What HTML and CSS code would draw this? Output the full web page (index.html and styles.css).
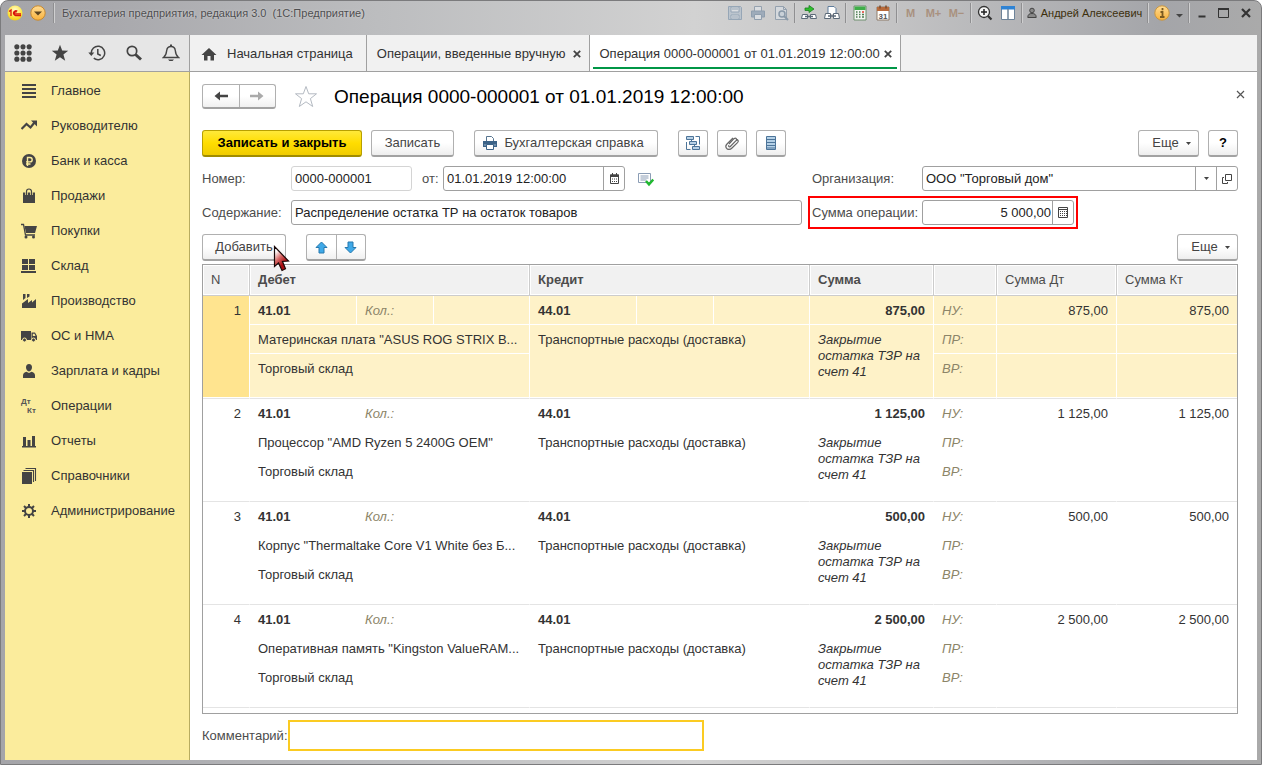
FILE: index.html
```html
<!DOCTYPE html>
<html lang="ru">
<head>
<meta charset="utf-8">
<title>Бухгалтерия предприятия, редакция 3.0</title>
<link rel="stylesheet" href="styles.css">
</head>
<body>
<div class="window">
  <header class="titlebar">
    <button class="tb-round" aria-label="Главное меню"><svg width="16" height="16" viewBox="0 0 16 16"><defs><radialGradient id="gy" cx=".5" cy=".3" r=".7"><stop offset="0" stop-color="#fffbd0"/><stop offset=".6" stop-color="#ffe84a"/><stop offset="1" stop-color="#f0c818"/></radialGradient><linearGradient id="go" x2="0" y2="1"><stop offset="0" stop-color="#ffdc94"/><stop offset="1" stop-color="#f9b23c"/></linearGradient></defs><circle cx="8" cy="8" r="7.5" fill="url(#gy)"/><path d="M2 6.500L4 5v6M10.300 6.200A2.400 2.400 0 1 0 8.500 10.500H14M9.300 7.400A1 1 0 1 0 8.500 8.800H14" fill="none" stroke="#d8140c" stroke-width="1.300"/></svg></button>
    <button class="tb-round" aria-label="Меню"><svg width="16" height="16" viewBox="0 0 16 16"><circle cx="8" cy="8" r="7.200" fill="url(#go)" stroke="#c98a2e"/><path d="M4 6.500h8L8 10.500z" fill="#5b4420"/></svg></button>
    <span class="tb-sep"></span>
    <span class="tb-title">Бухгалтерия предприятия, редакция 3.0&nbsp; (1С:Предприятие)</span>
    <div class="tb-tools">
      <button class="tb-btn faded" aria-label="Сохранить"><svg width="16" height="16" viewBox="0 0 16 16"><path d="M1.500 1.500h12l1 1v12h-13z" fill="#aebdcc" stroke="#718ba6"/><path d="M4 2h8v5H4zM4 10h8v4H4z" fill="#e3e8ee" stroke="#718ba6"/><path d="M5 4h6M5 12h6" stroke="#718ba6"/></svg></button>
      <button class="tb-btn faded" aria-label="Печать"><svg width="16" height="16" viewBox="0 0 16 16"><path d="M4.500 6V1.500h7V6" fill="#e3e8ee" stroke="#70859b"/><path d="M1.500 6h13v6h-13z" fill="#7f96ae" stroke="#667f99"/><path d="M4.500 9.500h7v5h-7z" fill="#e3e8ee" stroke="#667f99"/></svg></button>
      <button class="tb-btn faded" aria-label="Просмотр"><svg width="16" height="16" viewBox="0 0 16 16"><path d="M2.500 1.500h8l3 3v10h-11z" fill="#dce2e9" stroke="#70859b"/><path d="M10.500 1.500v3h3" fill="none" stroke="#70859b"/><circle cx="9" cy="9" r="3" fill="#c9d5e0" stroke="#5e7891" stroke-width="1.500"/><path d="M11 11l4 4" stroke="#5e7891" stroke-width="2"/></svg></button>
      <span class="tb-sep"></span>
      <button class="tb-btn" aria-label="Получить ссылку"><svg width="16" height="16" viewBox="0 0 16 16"><path d="M4 5.500V3h4V.500L13 4 8 7.500V5.500z" fill="#2fc02f" stroke="#1b7d1f" stroke-width=".8"/><path d="M1.500 9.500h5v4h-6zM9.500 9.500h5l1 4h-6z" fill="#fff" stroke="#5c6a78"/><path d="M4 11.500h8" stroke="#5c6a78" stroke-width="1.500"/></svg></button>
      <button class="tb-btn" aria-label="Перейти по ссылке"><svg width="16" height="16" viewBox="0 0 16 16"><path d="M4 9V1.500h6l2 2V9" fill="#fff" stroke="#5f7d9c"/><path d="M1.500 8.500h5v5h-6zM9.500 8.500h5l1 5h-6z" fill="#fff" stroke="#5c6a78"/><path d="M4 11h8" stroke="#5c6a78" stroke-width="1.500"/></svg></button>
      <span class="tb-sep"></span>
      <button class="tb-btn" aria-label="Калькулятор"><svg width="16" height="16" viewBox="0 0 16 16"><path d="M2 1h12v14H2z" fill="#f4f7f4" stroke="#6f8f6f"/><path d="M2.500 1.500h11v3.500h-11z" fill="#3fae49"/><path d="M4 7h1.500M7 7h1.500M4 9.500h1.500M7 9.500h1.500M4 12h1.500M7 12h1.500M10 9.500h2M10 12h2" stroke="#4c7c50" stroke-width="1.500"/><path d="M10 7h2" stroke="#e03a2c" stroke-width="1.500"/></svg></button>
      <button class="tb-btn" aria-label="Календарь"><svg width="16" height="16" viewBox="0 0 16 16"><path d="M2 2h12v13H2z" fill="#fff" stroke="#8e7a68"/><path d="M2 2h12v4H2z" fill="#b86a3b"/><path d="M5 .500v3M11 .500v3" stroke="#7a4b2c" stroke-width="1.500"/><text x="8" y="13.500" font-size="8" text-anchor="middle" class="day">31</text></svg></button>
      <span class="tb-sep"></span>
      <button class="tb-btn mem">M</button>
      <button class="tb-btn mem">M+</button>
      <button class="tb-btn mem">M−</button>
      <span class="tb-sep"></span>
      <button class="tb-btn" aria-label="Масштаб"><svg width="16" height="16" viewBox="0 0 16 16"><circle cx="7" cy="7" r="5.500" fill="#f5f5f5" stroke="#333" stroke-width="1.300"/><path d="M4 7h6M7 4v6" stroke="#222" stroke-width="1.500"/><path d="M11 11l3.500 3.500" stroke="#333" stroke-width="2.200"/></svg></button>
      <button class="tb-btn" aria-label="Панели"><svg width="16" height="16" viewBox="0 0 16 16"><path d="M1.500 1.500h13v13h-13z" fill="#fff" stroke="#6d8399"/><path d="M1 1h14v3.500H1z" fill="#2f83d4"/><path d="M8 4v11" stroke="#6d8399" stroke-width="1.500"/></svg></button>
      <span class="tb-sep"></span>
      <button class="tb-user"><svg width="10" height="12" viewBox="0 0 10 12"><circle cx="5" cy="3.500" r="2.300" fill="#888" stroke="#444"/><path d="M.800 10.500c0-3 1.500-4 4.200-4s4.200 1 4.200 4z" fill="#888" stroke="#444"/></svg>Андрей Алексеевич</button>
      <span class="tb-sep"></span>
      <button class="tb-btn" aria-label="Справка"><svg width="16" height="16" viewBox="0 0 16 16"><circle cx="8" cy="8" r="7.200" fill="url(#go)" stroke="#c9963f"/><path d="M8.500 3v2.200M6.500 7h2v5M6 12h4.500" fill="none" stroke="#7b5a20" stroke-width="1.800"/></svg></button>
      <button class="tb-drop" aria-label="Еще"><svg width="9" height="9" viewBox="0 0 9 9"><path d="M1 5h7L4.500 8.500z" fill="#444"/></svg></button>
      <span class="tb-sep"></span>
      <button class="tb-win" aria-label="Свернуть"><svg width="12" height="12" viewBox="0 0 12 12"><path d="M2.500 9.500h7" stroke="#333" stroke-width="2"/></svg></button>
      <button class="tb-win" aria-label="Развернуть"><svg width="12" height="12" viewBox="0 0 12 12"><path d="M.500 1.500h10v9H.500z" fill="none" stroke="#333"/><path d="M0 2h11" stroke="#333" stroke-width="2"/></svg></button>
      <button class="tb-win" aria-label="Закрыть"><svg width="12" height="12" viewBox="0 0 12 12"><path d="M2 2l8 8M10 2l-8 8" stroke="#333" stroke-width="2.200"/></svg></button>
    </div>
  </header>

  <div class="app">
    <div class="topstrip">
      <div class="quick">
        <button aria-label="Разделы"><svg width="18" height="18" viewBox="0 0 19 19" fill="#444"><circle cx="3" cy="3" r="2.700"/><circle cx="9.500" cy="3" r="2.700"/><circle cx="16" cy="3" r="2.700"/><circle cx="3" cy="9.500" r="2.700"/><circle cx="9.500" cy="9.500" r="2.700"/><circle cx="16" cy="9.500" r="2.700"/><circle cx="3" cy="16" r="2.700"/><circle cx="9.500" cy="16" r="2.700"/><circle cx="16" cy="16" r="2.700"/></svg></button>
        <button aria-label="Избранное"><svg width="18" height="18" viewBox="0 0 18 18"><path d="M9 .800l2.200 5.800 6 .200-4.800 3.800 1.800 6.200L9 13.300l-5.200 3.500 1.800-6.200L.800 6.800l6-.200z" fill="#444"/></svg></button>
        <button aria-label="История"><svg width="18" height="18" viewBox="0 0 18 18" fill="none" stroke="#444" stroke-width="1.500"><path d="M3.300 9.500a6.700 6.700 0 1 1 2.500 4.700"/><path d="M9.800 5v5l3 1.500"/><path d="M.300 8.500h6l-3 3.500z" fill="#444" stroke="none"/></svg></button>
        <button aria-label="Поиск"><svg width="18" height="18" viewBox="0 0 18 18" fill="none" stroke="#444"><circle cx="7" cy="7" r="4.700" stroke-width="1.700"/><path d="M10.500 10.500L16 15.500" stroke-width="3"/></svg></button>
        <button aria-label="Уведомления"><svg width="18" height="18" viewBox="0 0 18 18"><path d="M1.500 13.500h15C14 11.500 13.500 9 13.300 6.500 13 4 11.500 2.500 9 2.500S5 4 4.700 6.500C4.500 9 4 11.500 1.500 13.500z" fill="none" stroke="#444" stroke-width="1.400"/><path d="M8 .500h2v2H8zM6 15.500h6L10.500 17h-3z" fill="#444"/></svg></button>
      </div>
      <nav class="tabs">
        <a class="tab home" href="#"><svg width="16" height="14" viewBox="0 0 16 14"><path d="M8 1L.500 8H3v5.500h3.500V9h3v4.500H13V8h2.500z" fill="#444"/></svg>Начальная страница</a>
        <div class="tab"><a href="#">Операции, введенные вручную</a><button aria-label="Закрыть вкладку"><svg width="8" height="8" viewBox="0 0 8 8"><path d="M.800.800l6.400 6.400M7.200.800L.800 7.200" stroke="#444" stroke-width="1.800"/></svg></button></div>
        <div class="tab active"><a href="#">Операция 0000-000001 от 01.01.2019 12:00:00</a><button aria-label="Закрыть вкладку"><svg width="8" height="8" viewBox="0 0 8 8"><path d="M.800.800l6.400 6.400M7.200.800L.800 7.200" stroke="#444" stroke-width="1.800"/></svg></button></div>
      </nav>
    </div>

    <div class="body">
      <nav class="sidebar">
        <a href="#"><svg viewBox="0 0 16 16"><path d="M1 2h14M1 6h14M1 10h14M1 14h14" stroke="#444" stroke-width="2"/></svg>Главное</a>
        <a href="#"><svg viewBox="0 0 16 16"><path d="M.500 11l5-5 4 3.500 4-5" fill="none" stroke="#444" stroke-width="2.200"/><path d="M10 2.500h6v6z" fill="#444"/></svg>Руководителю</a>
        <a href="#"><svg viewBox="0 0 16 16"><circle cx="8" cy="8" r="7" fill="#444"/><path d="M6.500 13V4.500H9a2.200 2.200 0 0 1 0 4.400H5M5 11h4.500" fill="none" stroke="#fbec9c" stroke-width="1.400"/></svg>Банк и касса</a>
        <a href="#"><svg viewBox="0 0 16 16"><path d="M2 4.500h12V15H2z" fill="#444"/><path d="M5.500 7V3.500a2.500 2.500 0 0 1 5 0V7" fill="none" stroke="#fbec9c" stroke-width="2.600"/><path d="M5.500 7V3.500a2.500 2.500 0 0 1 5 0V7" fill="none" stroke="#444" stroke-width="1.200"/></svg>Продажи</a>
        <a href="#"><svg viewBox="0 0 16 16"><path d="M3.500 3H16l-2 7H5z" fill="#444"/><path d="M0 1.500h2.500L4.500 12H14" stroke="#444" fill="none" stroke-width="1.300"/><circle cx="5" cy="14" r="1.500" fill="#444"/><circle cx="12.500" cy="14" r="1.500" fill="#444"/></svg>Покупки</a>
        <a href="#"><svg viewBox="0 0 16 16"><path d="M1 1h6v5H1zM8 1h6v5H8zM1 7h6v5H1zM8 7h6v5H8zM0 13h15v2H0z" fill="#444"/></svg>Склад</a>
        <a href="#"><svg viewBox="0 0 16 16"><path d="M1 15v-4.500L7 6v4l4-3v2.500L15 6v9zM2 1h2.500v4L2 7zM6 1h2.500v2.500L6 5z" fill="#444"/></svg>Производство</a>
        <a href="#"><svg viewBox="0 0 16 16"><path d="M0 3h10v9H0zM10.500 4.500H14l2 3.500v4h-5.500z" fill="#444"/><path d="M11.800 5.800h1.700l1 2.200h-2.700z" fill="#fbec9c"/><g fill="#444" stroke="#fbec9c"><circle cx="3.500" cy="12" r="2"/><circle cx="12.500" cy="12" r="2"/></g></svg>ОС и НМА</a>
        <a href="#"><svg viewBox="0 0 16 16"><path d="M8 1c2 0 3 1.300 3 3.300S9.800 8.500 8 8.500 5 6.300 5 4.300 6 1 8 1zM2 15v-2.500C2 10 3.500 9.500 5.500 8.800L8 10l2.500-1.200c2 .700 3.500 1.200 3.500 3.700V15z" fill="#444"/></svg>Зарплата и кадры</a>
        <a href="#"><svg viewBox="0 0 16 16" class="dtkt"><text x="0" y="6">Дт</text><text x="6" y="15">Кт</text></svg>Операции</a>
        <a href="#"><svg viewBox="0 0 16 16"><path d="M1 13h14v1.500H1zM2 4h3v9H2zM6.500 7h3v6h-3zM11 3h3v10h-3z" fill="#444"/></svg>Отчеты</a>
        <a href="#"><svg viewBox="0 0 16 16"><path d="M1 4h10v12H1z" fill="#444"/><path d="M2.500 2.500h10V14M4.500.500h10V13" fill="none" stroke="#444" stroke-width="1.100"/></svg>Справочники</a>
        <a href="#"><svg viewBox="0 0 16 16"><circle cx="8" cy="8" r="4" fill="none" stroke="#444" stroke-width="2"/><path d="M8 1v3M8 12v3M1 8h3M12 8h3M3 3l2.200 2.200M10.800 10.800L13 13M13 3l-2.200 2.200M5.200 10.800L3 13" stroke="#444" stroke-width="2"/></svg>Администрирование</a>
      </nav>

      <main class="content">
        <div class="heading">
          <div class="split nav"><button aria-label="Назад"><svg width="14" height="10" viewBox="0 0 14 10"><path d="M6 .500L.500 5 6 9.500V6.200h8V3.800H6z" fill="#444"/></svg></button><button aria-label="Вперед"><svg width="14" height="10" viewBox="0 0 14 10"><path d="M8 .500L13.500 5 8 9.500V6.200H0V3.800h8z" fill="#aaa"/></svg></button></div>
          <svg class="star" width="24" height="24" viewBox="0 0 24 24"><path d="M12 1.500l2.700 7.300h7.800l-6.100 4.800 2.300 7.900L12 16.800l-6.700 4.700 2.300-7.900L1.500 8.800h7.800z" fill="#fff" stroke="#b4bac2"/></svg>
          <h1>Операция 0000-000001 от 01.01.2019 12:00:00</h1>
          <button class="close" aria-label="Закрыть"><svg width="9" height="9" viewBox="0 0 9 9"><path d="M1 1l7 7M8 1L1 8" stroke="#555" stroke-width="1.200"/></svg></button>
        </div>

        <div class="commands">
          <button class="btn primary">Записать и закрыть</button>
          <button class="btn save">Записать</button>
          <button class="btn report"><svg width="14" height="14" viewBox="0 0 14 14"><path d="M3.500 5V.500h5l2 2V5" fill="#fff" stroke="#56748f"/><path d="M0 5h14v6H0z" fill="#3c6388"/><path d="M1 9h12" stroke="#9bb4ca"/><path d="M3.500 8.500h7v5h-7z" fill="#fff" stroke="#3c6388"/></svg>Бухгалтерская справка</button>
          <div class="icons">
            <button class="btn icon" aria-label="Структура подчиненности"><svg width="16" height="16" viewBox="0 0 16 16"><g fill="#b9d1e6" stroke="#4c7499"><path d="M1.500 1.500h7v3h-7zM4.500 6.500h7v3h-7zM7.500 11.500h7v3h-7z"/><path d="M10.500 1.500h4v8M1.500 7v7.500h4M6.500 4.500v2M9.500 9.500v2" fill="none"/></g></svg></button>
            <button class="btn icon" aria-label="Файлы"><svg width="16" height="16" viewBox="0 0 16 16"><path d="M5 9l5-5.300c1.700-1.500 3.500.300 2 2L6.300 11.500c-1 1-2.300-.200-1.300-1.300M12 5.700l1.500-1c1.200 1 .800 2 0 2.900L8 13c-2 2-4.500 1.500-5.500.300C1.500 12 1.500 10.500 3 9L9 2.800" fill="none" stroke="#666" stroke-width="1.200"/></svg></button>
            <button class="btn icon" aria-label="Реестр"><svg width="16" height="16" viewBox="0 0 16 16"><path d="M3.500 1.500h9v13h-9z" fill="#b4d0e6" stroke="#4c7499"/><path d="M3 4.500h10M3 7.500h10M3 10.500h10M3 13h10" stroke="#4c7499" stroke-width="1.200"/></svg></button>
          </div>
          <button class="btn more push">Еще<svg width="5" height="3" viewBox="0 0 5 3"><path d="M0 0h5L2.500 3z" fill="#444"/></svg></button>
          <button class="btn icon help">?</button>
        </div>

        <div class="form">
          <div class="left">
            <div class="row">
              <label class="cap" for="num">Номер:</label>
              <div class="field pale num"><input id="num" value="0000-000001"></div>
              <label class="from" for="date">от:</label>
              <div class="field date"><input id="date" value="01.01.2019 12:00:00"><button aria-label="Выбрать дату"><svg width="11" height="11" viewBox="0 0 11 11"><path d="M1.500 2h8v8.500h-8z" fill="#fff" stroke="#444"/><path d="M1 1.500h9V4H1z" fill="#444"/><path d="M3.500 0v2M7.500 0v2" stroke="#444"/><path d="M3 6h6M3 8.500h6" stroke="#444" stroke-dasharray="1 1"/></svg></button></div>
              <svg class="posted" width="16" height="16" viewBox="0 0 16 16"><path d="M.500 2.500h12v9H.500z" fill="#fff" stroke="#8b9db5"/><path d="M2.500 5h8M2.500 7h8M2.500 9h6" stroke="#8b9db5"/><path d="M8 10l3 3.300L15.300 8.500" fill="none" stroke="#20b830" stroke-width="2.500"/></svg>
            </div>
            <div class="row">
              <label class="cap" for="text">Содержание:</label>
              <div class="field grow"><input id="text" value="Распределение остатка ТР на остаток товаров"></div>
            </div>
          </div>
          <div class="right">
            <div class="row">
              <label class="cap2" for="org">Организация:</label>
              <div class="field grow"><input id="org" value="ООО &quot;Торговый дом&quot;"><button aria-label="Выбрать"><svg width="5" height="3" viewBox="0 0 5 3"><path d="M0 0h5L2.500 3z" fill="#444"/></svg></button><button aria-label="Открыть"><svg width="10" height="10" viewBox="0 0 10 10" fill="none" stroke="#444"><path d="M3.500.500h6v6h-6z"/><path d="M2 3.500H.500v6h5V8"/></svg></button></div>
            </div>
            <div class="row marked">
              <label class="cap2" for="sum">Сумма операции:</label>
              <div class="field sum"><input id="sum" value="5 000,00"><button aria-label="Калькулятор"><svg width="10" height="11" viewBox="0 0 10 11"><path d="M.500.500h9v10h-9z" fill="#fff" stroke="#444"/><path d="M0 2.500h10" stroke="#444"/><path d="M2 4.500h7M2 6.500h7M2 8.500h7" stroke="#444" stroke-dasharray="1 1"/></svg></button></div>
            </div>
          </div>
        </div>

        <div class="listbar">
          <div class="addwrap"><button class="btn add">Добавить</button><svg class="cursor" width="18" height="28" viewBox="0 0 18 28"><defs><linearGradient id="cur" x2=".6" y2="1"><stop offset=".2" stop-color="#fff"/><stop offset=".5" stop-color="#d86a68"/><stop offset=".8" stop-color="#a80c10"/></linearGradient></defs><path d="M1.500 1.500v20l4-3.500 3.500 7.500 3.500-1.800L9.500 16.500l6-.500z" fill="url(#cur)" stroke="#1a0808" stroke-width="1.200"/></svg></div>
          <div class="split move"><button aria-label="Вверх"><svg width="13" height="13" viewBox="0 0 13 13"><path d="M6.500 1L12 6.500H9v5.500H4V6.500H1z" fill="#3fa9e8" stroke="#2678ae"/></svg></button><button aria-label="Вниз"><svg width="13" height="13" viewBox="0 0 13 13"><path d="M6.500 12L12 6.500H9V1H4v5.500H1z" fill="#3fa9e8" stroke="#2678ae"/></svg></button></div>
          <button class="btn more push">Еще<svg width="5" height="3" viewBox="0 0 5 3"><path d="M0 0h5L2.500 3z" fill="#444"/></svg></button>
        </div>

        <div class="grid">
          <table>
            <colgroup><col class="c-n"><col class="c-acc"><col class="c-qty"><col><col class="c-acc"><col class="c-qty"><col><col class="c-sum"><col class="c-kind"><col class="c-amt"><col class="c-amt"></colgroup>
            <thead><tr><th>N</th><th colspan="3" class="b">Дебет</th><th colspan="3" class="b">Кредит</th><th class="b">Сумма</th><th></th><th>Сумма Дт</th><th>Сумма Кт</th></tr></thead>
            <tbody class="selected">
              <tr><td rowspan="3" class="n">1</td><td class="b">41.01</td><td class="k">Кол.:</td><td></td><td class="b">44.01</td><td></td><td></td><td class="b r">875,00</td><td class="k">НУ:</td><td class="r">875,00</td><td class="r">875,00</td></tr>
              <tr><td colspan="3">Материнская плата "ASUS ROG STRIX B...</td><td colspan="3" rowspan="2">Транспортные расходы (доставка)</td><td rowspan="2" class="note">Закрытие остатка ТЗР на счет 41</td><td class="k">ПР:</td><td></td><td></td></tr>
              <tr class="last"><td colspan="3">Торговый склад</td><td class="k">ВР:</td><td></td><td></td></tr>
            </tbody>
            <tbody>
              <tr><td rowspan="3" class="n">2</td><td class="b">41.01</td><td class="k">Кол.:</td><td></td><td class="b">44.01</td><td></td><td></td><td class="b r">1 125,00</td><td class="k">НУ:</td><td class="r">1 125,00</td><td class="r">1 125,00</td></tr>
              <tr><td colspan="3">Процессор "AMD Ryzen 5 2400G OEM"</td><td colspan="3" rowspan="2">Транспортные расходы (доставка)</td><td rowspan="2" class="note">Закрытие остатка ТЗР на счет 41</td><td class="k">ПР:</td><td></td><td></td></tr>
              <tr class="last"><td colspan="3">Торговый склад</td><td class="k">ВР:</td><td></td><td></td></tr>
            </tbody>
            <tbody>
              <tr><td rowspan="3" class="n">3</td><td class="b">41.01</td><td class="k">Кол.:</td><td></td><td class="b">44.01</td><td></td><td></td><td class="b r">500,00</td><td class="k">НУ:</td><td class="r">500,00</td><td class="r">500,00</td></tr>
              <tr><td colspan="3">Корпус "Thermaltake Core V1 White без Б...</td><td colspan="3" rowspan="2">Транспортные расходы (доставка)</td><td rowspan="2" class="note">Закрытие остатка ТЗР на счет 41</td><td class="k">ПР:</td><td></td><td></td></tr>
              <tr class="last"><td colspan="3">Торговый склад</td><td class="k">ВР:</td><td></td><td></td></tr>
            </tbody>
            <tbody>
              <tr><td rowspan="3" class="n">4</td><td class="b">41.01</td><td class="k">Кол.:</td><td></td><td class="b">44.01</td><td></td><td></td><td class="b r">2 500,00</td><td class="k">НУ:</td><td class="r">2 500,00</td><td class="r">2 500,00</td></tr>
              <tr><td colspan="3">Оперативная память "Kingston ValueRAM...</td><td colspan="3" rowspan="2">Транспортные расходы (доставка)</td><td rowspan="2" class="note">Закрытие остатка ТЗР на счет 41</td><td class="k">ПР:</td><td></td><td></td></tr>
              <tr class="last"><td colspan="3">Торговый склад</td><td class="k">ВР:</td><td></td><td></td></tr>
            </tbody>
          </table>
        </div>

        <div class="comment">
          <label for="comment">Комментарий:</label>
          <input id="comment" type="text">
        </div>
      </main>
    </div>
  </div>
</div>
</body>
</html>
```
FILE: styles.css
```css
* { box-sizing: border-box; }
body { margin: 0; background: #fff; font: 13px/16px "Liberation Sans", Arial, sans-serif; color: #333; }
button, input { font: inherit; color: inherit; margin: 0; padding: 0; border: 0; background: none; }
button { display: flex; align-items: center; justify-content: center; }
a { color: inherit; text-decoration: none; }
svg { display: block; flex: none; }

.window {
  display: flex;
  flex-direction: column;
  height: 100vh;
  padding: 0 4px 4px;
  border: 1px solid #7b7b7d;
  border-radius: 8px 8px 0 0;
  background: linear-gradient(90deg, #a5a5a9 0%, #a8a8ac 8%, #bcbdbf 30%, #d2d2d2 55%, #c4c4c5 70%, #a4a5a9 92%, #aaa 100%);
}

.titlebar { display: flex; align-items: center; flex: none; height: 34px; padding-bottom: 10px; font-size: 11px; }
.tb-round { width: 23px; height: 20px; padding-right: 4px; }
.tb-sep { flex: none; width: 1px; height: 20px; margin: 0 2px; background: #8f8f91; box-shadow: 1px 0 #cfcfd0; }
.tb-title { margin-left: 6px; color: #4e4e50; text-shadow: 0 0 2px #ddd; white-space: nowrap; }
.tb-tools { display: flex; align-items: center; margin-left: auto; }
.tb-btn { width: 23px; height: 20px; }
.faded { opacity: .6; }
.mem { color: #a9917f; font-weight: bold; }
.day { font-weight: bold; fill: #555; }
.tb-user { gap: 4px; width: 121px; color: #3c2f0c; white-space: nowrap; }
.tb-drop { width: 13px; height: 20px; }
.tb-win { width: 22px; height: 20px; }

.app { display: flex; flex-direction: column; flex: 1; min-height: 0; background: #fff; }
.topstrip { display: flex; flex: none; height: 37px; border-bottom: 1px solid #a0a0a0; background: #f1f1f1; }
.quick { display: grid; grid-template-columns: repeat(5, 1fr); flex: none; width: 185px; border-right: 1px solid #a0a0a0; background: #e6e6e6; }
.tabs { display: flex; }
.tab { display: flex; align-items: center; gap: 7px; padding: 1px 8px 0 10px; border-right: 1px solid #a0a0a0; white-space: nowrap; }
.tab.home { gap: 10px; padding: 1px 13px 0 11px; }
.tab button { width: 8px; height: 16px; }
.tab.active { gap: 4px; background: linear-gradient(#009646, #009646) center bottom 2px / calc(100% - 6px) 2px no-repeat #fff; }

.body { display: flex; flex: 1; min-height: 0; }
.sidebar { flex: none; width: 185px; padding-top: 1px; border-right: 1px solid #b8ac60; background: #fbec9c; }
.sidebar a { display: flex; align-items: center; gap: 14px; height: 35px; padding-left: 16px; }
.sidebar svg { width: 16px; height: 16px; }
.sidebar .dtkt { font: bold 8px "Liberation Sans", Arial, sans-serif; fill: #555; overflow: visible; }

.content { display: flex; flex-direction: column; flex: 1; min-width: 0; padding: 12px 19px 9px 12px; }
.heading { display: flex; align-items: center; height: 25px; margin-bottom: 21px; }
.split { display: flex; border: 1px solid #b0b0b0; border-bottom: 2px solid #a2a2a2; border-radius: 3px; background: linear-gradient(#fff 50%, #f0f0f0); }
.split button { flex: 1; }
.split button + button { border-left: 1px solid #b0b0b0; }
.nav { width: 74px; height: 25px; }
.star { margin: 0 16px 0 18px; }
h1 { margin: 0; font-size: 19px; line-height: 24px; font-weight: normal; color: #000; white-space: nowrap; }
.close { align-self: flex-start; width: 13px; height: 20px; margin: 0 -9px 0 auto; }

.btn { height: 27px; border: 1px solid #b0b0b0; border-bottom: 2px solid #a2a2a2; border-radius: 3px; background: linear-gradient(#fff 50%, #eee); color: #444; white-space: nowrap; }
.commands, .listbar { display: flex; gap: 9px; }
.commands { margin-bottom: 9px; }
.primary { width: 160px; border-color: #b8a000; border-bottom-color: #a08c00; background: linear-gradient(#ffe93a, #ffdd00 50%, #f0cc00); color: #000; font-weight: bold; }
.save { width: 83px; }
.report { gap: 7px; width: 184px; padding-right: 5px; margin-left: 11px; }
.icons { display: flex; gap: 9px; margin-left: 11px; }
.icon { width: 30px; }
.more { gap: 7px; width: 61px; padding-left: 6px; }
.push { margin-left: auto; }
.help { color: #000; font-weight: bold; }

.form { display: flex; gap: 10px; margin-bottom: 9px; color: #4c4c4c; }
.left { display: flex; flex-direction: column; gap: 9px; flex: 600; }
.right { display: flex; flex-direction: column; gap: 9px; flex: 426; }
.row { display: flex; align-items: center; height: 25px; }
.cap { flex: none; width: 89px; }
.cap2 { flex: none; width: 110px; white-space: nowrap; }
.field { display: flex; height: 25px; border: 1px solid #a0a0a0; border-radius: 3px; background: #fff; }
.field input { flex: 1; width: 0; min-width: 0; padding: 0 3px; color: #222; }
.field button { flex: none; width: 21px; border-left: 1px solid #a0a0a0; }
.pale { border-color: #d4d4d4; }
.grow { flex: 1; }
.num { width: 121px; }
.from { width: 31px; padding-left: 10px; }
.date { width: 182px; }
.posted { margin-left: 13px; }
.marked { align-self: flex-start; outline: 2px solid #f00; outline-offset: 2px; }
.sum { width: 152px; }
.sum input { padding: 0 1px; text-align: right; }

.listbar { margin-bottom: 3px; }
.addwrap { position: relative; }
.add { width: 84px; }
.cursor { position: absolute; left: 71px; top: 11px; z-index: 1; }
.move { width: 60px; height: 27px; margin-left: 11px; }

.grid { flex: 1; min-height: 0; overflow: hidden; border: 1px solid #a0a0a0; }
table { width: 100%; table-layout: fixed; border-collapse: separate; border-spacing: 0; }
.c-n { width: 47px; }
.c-acc { width: 107px; }
.c-qty { width: 77px; }
.c-sum { width: 124px; }
.c-kind { width: 63px; }
.c-amt { width: 120px; }
th, td { padding: 0 8px; text-align: left; font-weight: normal; white-space: nowrap; }
th { height: 31px; border-right: 1px solid #ccc; border-bottom: 1px solid #ccc; background: #f1f1f1; box-shadow: inset 0 0 0 1px #fff; color: #4c4c4c; }
td { height: 29px; padding-top: 7px; padding-bottom: 5px; border-right: 1px solid transparent; border-bottom: 1px solid transparent; vertical-align: top; }
th:last-child, td:last-child { border-right: 0; }
.last td { height: 45px; }
.last td, td[rowspan] { border-bottom-color: #e4e4e4; }
.selected td { border-right-color: #fff; border-bottom-color: #fff; background: #fef2c8; }
.selected .last td, .selected td[rowspan] { border-bottom-color: #e4e4e4; box-shadow: inset 0 -1px #fff; }
.selected .n { background: #ffe48f; }
.b { font-weight: bold; }
.r, .n { text-align: right; }
.k { color: #8c8568; font-style: italic; }
td.note { font-style: italic; white-space: normal; }

.comment { display: flex; align-items: center; flex: none; margin-top: 6px; color: #4c4c4c; }
.comment input { width: 416px; height: 31px; padding: 0 4px; border: 2px solid #fbcb22; background: #fff; }
```
